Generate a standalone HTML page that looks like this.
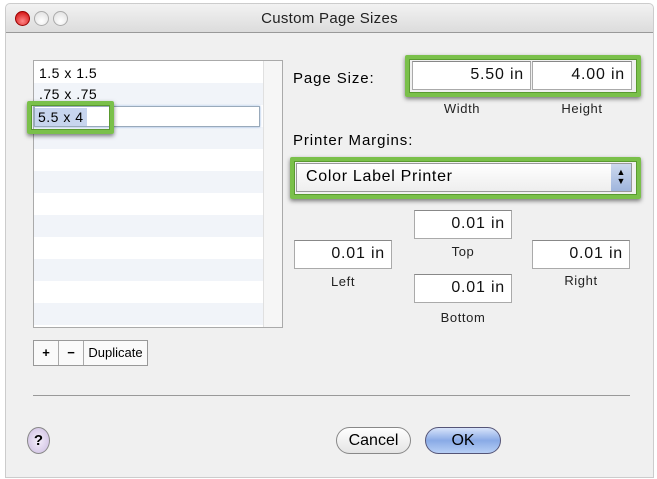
<!DOCTYPE html><html><head><style>
body{margin:0;width:657px;height:479px;background:#fff;font-family:"Liberation Sans",sans-serif;overflow:hidden}
.win{position:absolute;left:5px;top:3px;width:647px;height:473px;background:#f0f0f0;border:1px solid #ccc;border-radius:5px 5px 0 0}
.tb{position:absolute;left:0;top:0;right:0;height:28px;background:linear-gradient(#f2f2f2,#dcdcdc);border-bottom:1px solid #999;border-radius:5px 5px 0 0}
.tb .t{position:absolute;left:0;right:0;top:6px;text-align:center;font-size:15px;color:#222;letter-spacing:.3px}
.lt{position:absolute;top:7px;width:13px;height:13px;border-radius:50%;border:1px solid #aaa;background:radial-gradient(circle at 50% 70%,#fff,#ddd)}
.a{position:absolute}
.fld{position:absolute;background:#fff;border:1px solid #aaa;border-top-color:#888;box-sizing:border-box;text-align:right;font-size:16px;letter-spacing:.8px;padding:4px 6px 0 0;color:#111}
.lbl{position:absolute;font-size:13px;letter-spacing:.6px;color:#222;text-align:center}
.green{position:absolute;border:4px solid #7ac04a;box-shadow:0 2px 4px rgba(0,0,0,.5), inset 0 0 0 1px #5a9a30;border-radius:2px;box-sizing:border-box}
</style></head><body>
<div class="win">
<div class="tb"><div class="lt" style="left:9px;background:radial-gradient(circle at 50% 70%,#f88,#c00);border-color:#900"></div><div class="lt" style="left:28px"></div><div class="lt" style="left:47px"></div><div class="t">Custom Page Sizes</div></div>
</div>
<!-- list -->
<div class="a" style="left:33px;top:60px;width:248px;height:266px;border:1px solid #aaa;background:repeating-linear-gradient(#fff 0 22px,#f1f4f9 22px 44px)">
<div class="a" style="right:0;top:0;width:18px;height:266px;background:#f6f6f6;border-left:1px solid #e0e0e0"></div>
<div class="a" style="left:5px;top:4px;font-size:14px;letter-spacing:.5px">1.5 x 1.5</div>
<div class="a" style="left:5px;top:25px;font-size:14px;letter-spacing:.5px">.75 x .75</div>
<div class="a" style="left:0;top:45px;width:226px;height:21px;background:#fff;border:1px solid #9ab;box-sizing:border-box;box-shadow:0 0 2px #8ad"><span style="background:#c7d5ee;font-size:14px;letter-spacing:.5px;padding:1px 3px;position:relative;top:2px">5.5 x 4</span></div>
</div>
<div class="green" style="left:27px;top:101px;width:87px;height:33px"></div>
<!-- buttons -->
<div class="a" style="left:33px;top:340px;width:115px;height:26px;border:1px solid #999;background:#fafafa;box-sizing:border-box;font-size:13px;display:flex">
<div style="width:24px;border-right:1px solid #aaa;text-align:center;line-height:24px;font-weight:bold">+</div><div style="width:24px;border-right:1px solid #aaa;text-align:center;line-height:24px;font-weight:bold">−</div><div style="flex:1;text-align:center;line-height:24px">Duplicate</div></div>
<!-- right -->
<div class="a" style="left:293px;top:70px;font-size:15px;letter-spacing:.9px">Page Size:</div>
<div class="fld" style="left:412px;top:61px;width:119px;height:29px">5.50 in</div>
<div class="fld" style="left:532px;top:61px;width:100px;height:29px">4.00 in</div>
<div class="green" style="left:405px;top:55px;width:236px;height:42px"></div>
<div class="lbl" style="left:432px;top:101px;width:60px">Width</div>
<div class="lbl" style="left:552px;top:101px;width:60px">Height</div>
<div class="a" style="left:293px;top:132px;font-size:15px;letter-spacing:.9px">Printer Margins:</div>
<div class="a" style="left:296px;top:163px;width:336px;height:29px;background:linear-gradient(#fff,#eee);border:1px solid #999;box-sizing:border-box;font-size:16px;letter-spacing:.7px;padding:4px 0 0 9px">Color Label Printer
<div class="a" style="right:0;top:0;width:20px;height:27px;background:linear-gradient(#cdd9ee,#9fb5dd);font-size:9px;text-align:center;line-height:9px;padding-top:4px;box-sizing:border-box;letter-spacing:0">▲<br>▼</div></div>
<div class="green" style="left:290px;top:157px;width:351px;height:42px"></div>
<div class="fld" style="left:414px;top:210px;width:98px;height:29px">0.01 in</div>
<div class="lbl" style="left:433px;top:244px;width:60px">Top</div>
<div class="fld" style="left:294px;top:240px;width:98px;height:29px">0.01 in</div>
<div class="lbl" style="left:313px;top:274px;width:60px">Left</div>
<div class="fld" style="left:532px;top:240px;width:98px;height:29px">0.01 in</div>
<div class="lbl" style="left:551px;top:273px;width:60px">Right</div>
<div class="fld" style="left:414px;top:274px;width:98px;height:29px">0.01 in</div>
<div class="lbl" style="left:433px;top:310px;width:60px">Bottom</div>
<div class="a" style="left:33px;top:395px;width:597px;height:1px;background:#999"></div>
<div class="a" style="left:27px;top:427px;width:21px;height:25px;border-radius:50%;border:1px solid #888;background:radial-gradient(#f4eefa,#cbbbe0);text-align:center;font-weight:bold;font-size:15px;line-height:25px">?</div>
<div class="a" style="left:336px;top:427px;width:75px;height:27px;border-radius:14px;border:1px solid #888;background:linear-gradient(#fff,#e4e4e4);box-sizing:border-box;text-align:center;font-size:16px;line-height:25px">Cancel</div>
<div class="a" style="left:425px;top:427px;width:76px;height:27px;border-radius:14px;border:1px solid #557;background:linear-gradient(#d7e3fa,#89aae6 50%,#b7cff5);box-sizing:border-box;text-align:center;font-size:16px;line-height:25px">OK</div>
</body></html>
